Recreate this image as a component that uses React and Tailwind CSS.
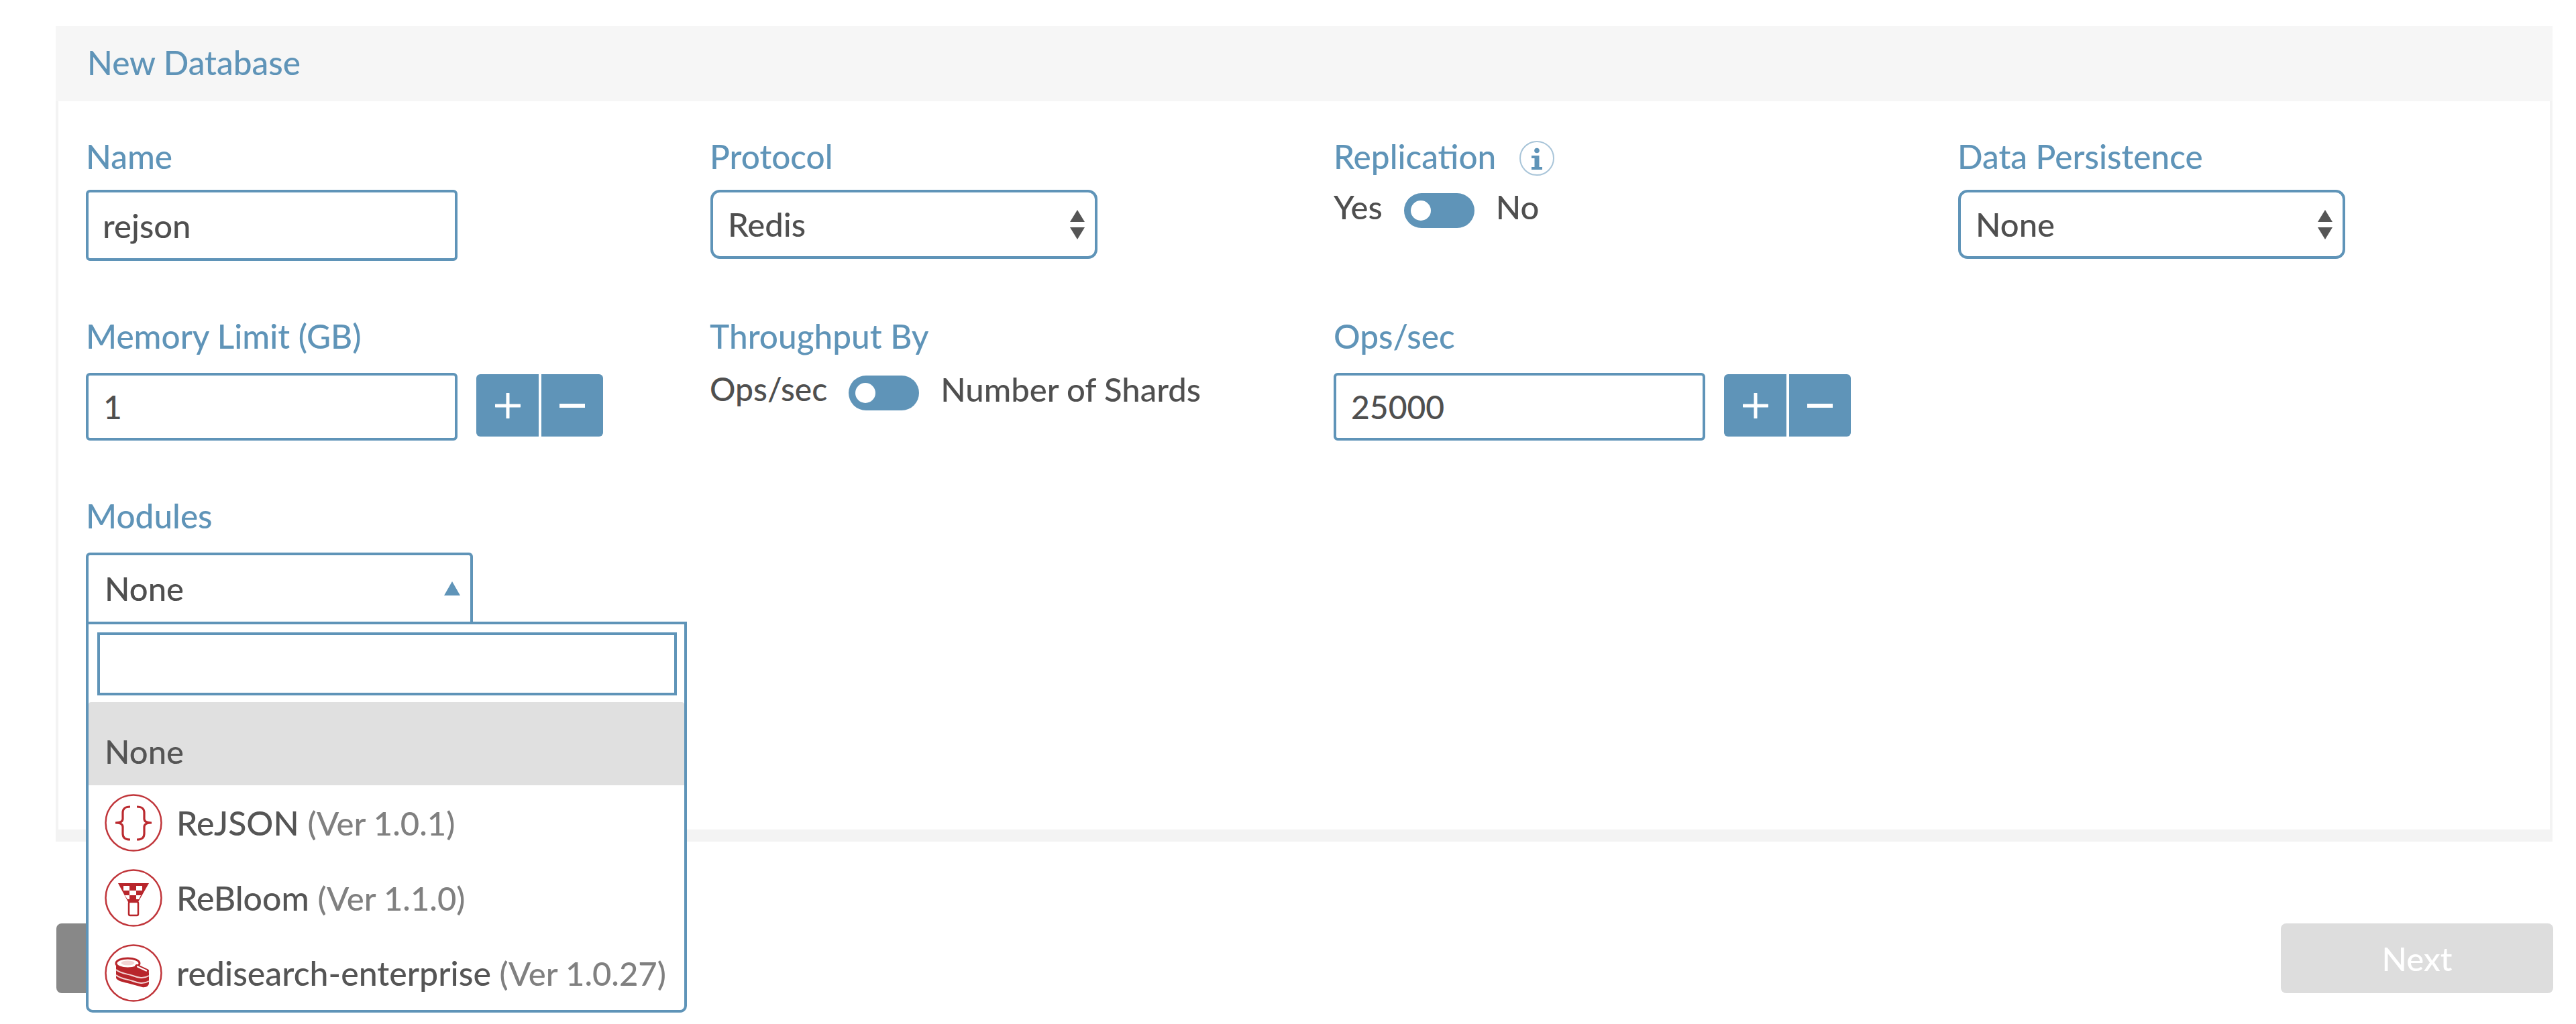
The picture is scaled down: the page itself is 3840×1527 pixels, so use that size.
const Label = ({ children }) => (
  <div className="h-[60px] pt-[1px] text-[49.5px] leading-[60px] text-[#5f94b8]">{children}</div>
)

const Arrows = () => (
  <svg width="22" height="44" viewBox="0 0 22 44" className="shrink-0">
    <path d="M11 0 L22 18 H0 Z" fill="#555" />
    <path d="M0 26 H22 L11 44 Z" fill="#555" />
  </svg>
)

const SelectBox = ({ value }) => (
  <div className="ml-px mt-[21px] flex h-[103px] w-[577px] items-center justify-between rounded-[14px] border-4 border-[#5f94b8] pl-[22px] pr-[15px]">
    <span>{value}</span>
    <Arrows />
  </div>
)

const Stepper = () => (
  <div className="ml-[28px] mt-[2px] flex h-[93px] gap-[4px]">
    <button className="flex w-[93px] items-center justify-center rounded-l-md bg-[#5f94b8]">
      <svg width="38" height="38" viewBox="0 0 38 38">
        <path d="M19 1 V37 M1 19 H37" stroke="#fff" strokeWidth="5" strokeLinecap="round" />
      </svg>
    </button>
    <button className="flex w-[92px] items-center justify-center rounded-r-md bg-[#5f94b8]">
      <svg width="38" height="38" viewBox="0 0 38 38">
        <path d="M1 19 H37" stroke="#fff" strokeWidth="6" strokeLinecap="round" />
      </svg>
    </button>
  </div>
)

const NumberField = ({ value }) => (
  <div className="mt-[26px] flex">
    <input
      readOnly
      value={value}
      className="h-[101px] w-[554px] rounded-md border-4 border-[#5f94b8] px-[22px] text-[48px] outline-none"
    />
    <Stepper />
  </div>
)

const Toggle = () => (
  <div className="mt-[10px] flex h-[52px] w-[105px] shrink-0 items-center rounded-full bg-[#5f94b8] pl-[10px]">
    <div className="h-[30px] w-[30px] rounded-full bg-white" />
  </div>
)

const InfoIcon = () => (
  <svg width="52" height="52" viewBox="0 0 52 52" className="ml-[35px] mt-[8px]">
    <circle cx="26" cy="26" r="25" fill="none" stroke="#a9c5d9" strokeWidth="2" />
    <circle cx="26" cy="14.5" r="3.8" fill="#5f94b8" />
    <path d="M18 22 H29.5 V39 H34 V43 H18 V39 H22.5 V26 H18 Z" fill="#5f94b8" />
  </svg>
)

const Ring = ({ children }) => (
  <svg width="86" height="86" viewBox="0 0 86 86" className="shrink-0">
    <circle cx="43" cy="43" r="41.5" fill="none" stroke="#c0353a" strokeWidth="2.5" />
    {children}
  </svg>
)

const JsonIcon = () => (
  <Ring>
    <path
      d="M38 19 C30 19 27 22 27 28 V37 C27 41 24 43 16 43 C24 43 27 45 27 49 V59 C27 65 30 68 38 68 M48 19 C56 19 59 22 59 28 V37 C59 41 62 43 70 43 C62 43 59 45 59 49 V59 C59 65 56 68 48 68"
      fill="none"
      stroke="#bb2a2f"
      strokeWidth="3.2"
    />
  </Ring>
)

const BloomIcon = () => (
  <Ring>
    <path d="M20 21 H66 L50 49 H35 Z" fill="#b8252b" />
    <path d="M28 25 H37 V32 H28 Z M47 25 H56 V32 H47 Z M37 32 H47 V39 H37 Z M30 39 H37 V45 H34 Z M47 39 H54 L51 45 H47 Z" fill="#fff" />
    <rect x="36" y="49" width="14" height="20" rx="2" fill="#fff" stroke="#b8252b" strokeWidth="2.5" />
  </Ring>
)

const SearchIcon = () => (
  <Ring>
    <path
      d="M17 28 V50 C17 53 24 56 34 58 L56 64 C62 65 66 62 66 58 V42 L52 36 L40 24 H24 Z"
      fill="#b8252b"
    />
    <path
      d="M17 38 C24 44 34 44 42 47 C50 50 58 52 66 47 M17 46 C24 52 34 52 42 55 C50 58 58 60 66 55"
      fill="none"
      stroke="#f3d5d5"
      strokeWidth="2"
    />
    <ellipse cx="34.5" cy="28.5" rx="17.5" ry="7.5" fill="#fff" stroke="#b8252b" strokeWidth="3" />
    <ellipse cx="34.5" cy="28" rx="10" ry="3.5" fill="#f3d5d5" />
    <path d="M48 33 L63 40" stroke="#b8252b" strokeWidth="6" strokeLinecap="round" />
    <path d="M49 33.5 L62 39.5" stroke="#fff" strokeWidth="2.2" strokeLinecap="round" />
  </Ring>
)

const ModuleOption = ({ icon, name, version }) => (
  <div className="flex h-[112px] items-center gap-[21px] pl-[24px] text-[50px] text-[#555]">
    {icon}
    <span>
      {name} <span className="text-[49px] text-[#808080]">{version}</span>
    </span>
  </div>
)

const ModulesSelect = () => (
  <div className="relative mt-[26px] w-[577px]">
    <div className="flex h-[103px] items-center justify-between rounded-t-md border-4 border-b-0 border-[#5f94b8] pl-[24px] pr-[15px]">
      <span>None</span>
      <svg width="24" height="21" viewBox="0 0 24 21">
        <path d="M12 0 L24 21 H0 Z" fill="#5f94b8" />
      </svg>
    </div>
    <div className="absolute left-0 top-full z-10 h-[583px] w-[896px] rounded-b-[10px] border-4 border-[#5f94b8] bg-white">
      <input readOnly className="ml-[13px] mt-[12px] block h-[94px] w-[864px] border-4 border-[#5f94b8] outline-none" />
      <div className="mt-[10px] h-[124px] rounded-t-sm bg-[#e0e0e0] pl-[24px] pt-[18px] leading-[111px] text-[#555]">None</div>
      <div>
        <ModuleOption icon={<JsonIcon />} name="ReJSON" version="(Ver 1.0.1)" />
        <ModuleOption icon={<BloomIcon />} name="ReBloom" version="(Ver 1.1.0)" />
        <ModuleOption icon={<SearchIcon />} name="redisearch-enterprise" version="(Ver 1.0.27)" />
      </div>
    </div>
  </div>
)

export default function App() {
  return (
    <div className="min-h-[1527px] bg-white pl-[83px] pr-[35px] pt-[39px] text-[49px] font-medium text-[#4f4f4f] [font-family:Lato,sans-serif]">
      <div className="border-x-4 border-b-[18px] border-[#f3f3f3]">
        <div className="-mx-[4px] flex h-[112px] items-center bg-[#f6f6f6] pb-[3px] pl-[47px] text-[49.5px] text-[#5f94b8]">New Database</div>
        <div className="grid grid-cols-[930px_930px_930px_1fr] grid-rows-[268px_268px_auto] pb-[310px] pl-[41px] pt-[51px]">
          <div>
            <Label>Name</Label>
            <input
              readOnly
              value="rejson"
              className="mt-[21px] h-[106px] w-[554px] rounded-md border-4 border-[#5f94b8] px-[21px] outline-none"
            />
          </div>
          <div>
            <Label>Protocol</Label>
            <SelectBox value="Redis" />
          </div>
          <div>
            <div className="flex items-start">
              <Label>Replication</Label>
              <InfoIcon />
            </div>
            <div className="mt-[16px] flex items-start gap-[32px] leading-[60px]">
              <span>Yes</span>
              <Toggle />
              <span>No</span>
            </div>
          </div>
          <div>
            <Label>Data Persistence</Label>
            <SelectBox value="None" />
          </div>

          <div>
            <Label>Memory Limit (GB)</Label>
            <NumberField value="1" />
          </div>
          <div>
            <Label>Throughput By</Label>
            <div className="mt-[20px] flex items-start gap-[32px] leading-[60px]">
              <span className="text-[48px]">Ops/sec</span>
              <Toggle />
              <span>Number of Shards</span>
            </div>
          </div>
          <div>
            <Label>Ops/sec</Label>
            <NumberField value="25000" />
          </div>
          <div />

          <div>
            <Label>Modules</Label>
            <ModulesSelect />
          </div>
        </div>
      </div>
      <div className="-mr-px ml-px mt-[122px] flex justify-between">
        <button className="h-[104px] w-[406px] rounded-lg bg-[#888]" />
        <button className="h-[104px] w-[406px] rounded-lg bg-[#ddd] pt-[2px] text-white">Next</button>
      </div>
    </div>
  )
}
